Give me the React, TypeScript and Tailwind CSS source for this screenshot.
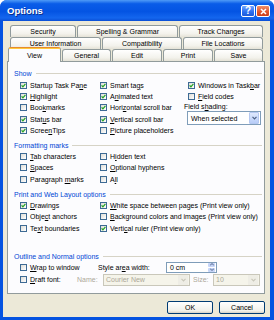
import React from 'react';

const font = "font-['Liberation_Sans',Arial,sans-serif]";

const Box: React.FC<{ checked?: boolean }> = ({ checked }) => (
  <span className="w-[7px] h-[7px] shrink-0 border border-[#3d6a94] bg-[linear-gradient(135deg,#dcdcd7,#ffffff)] flex items-center justify-center">
    {checked && (
      <svg width="5" height="5" viewBox="0 0 7 7">
        <path d="M0.8 3.4 L2.7 5.3 L6.2 1.2" stroke="#21a121" strokeWidth="1.7" fill="none" />
      </svg>
    )}
  </span>
);

const Check: React.FC<{ checked?: boolean; children: React.ReactNode }> = ({ checked, children }) => (
  <div className="flex items-center h-[11.4px] gap-[3px] whitespace-nowrap">
    <Box checked={checked} />
    <span>{children}</span>
  </div>
);

const Heading: React.FC<{ label: string }> = ({ label }) => (
  <div className="flex items-center h-[11.4px] text-[#0046d5]">
    <span className="whitespace-nowrap">{label}</span>
    <div className="flex-1 ml-[4px] h-px bg-[#d6d3c6]" />
  </div>
);

const Tab: React.FC<{ w: string; children: React.ReactNode }> = ({ w, children }) => (
  <div
    className={`${w} h-[12px] shrink-0 rounded-t-[3px] border border-b-0 border-[#919b9c] bg-[linear-gradient(180deg,#ffffff,#f3f2ec_70%,#e4e2d6)] flex items-center justify-center whitespace-nowrap`}
  >
    {children}
  </div>
);

const Chevron: React.FC<{ color: string }> = ({ color }) => (
  <svg width="5" height="4" viewBox="0 0 5 4">
    <path d="M0.5 0.8 L2.5 2.8 L4.5 0.8" stroke={color} strokeWidth="1.2" fill="none" />
  </svg>
);

const App: React.FC = () => {
  return (
    <div className={`${font} text-[7px] leading-none text-black w-[274px] h-[320px] bg-[#0553e1] rounded-t-[7px] overflow-hidden flex flex-col`}>
      {/* title bar */}
      <div className="h-[21px] shrink-0 bg-[linear-gradient(180deg,#4f9bf7_0%,#0a5ce8_18%,#0454e3_55%,#1466ee_85%,#0a4fd6_100%)] flex items-center pl-[7px] pr-[4px]">
        <span className="text-white font-bold text-[9.5px] [text-shadow:1px_1px_0_#0a2f8c] flex-1">Options</span>
        <div className="flex gap-[1px] mt-[1px]">
          <div className="w-[14px] h-[12px] rounded-[2px] border border-white bg-[linear-gradient(180deg,#6fa5ff,#2a6ef0_60%,#1d5ad8)] flex items-center justify-center text-white font-bold text-[10px]">
            ?
          </div>
          <div className="w-[14px] h-[12px] rounded-[2px] border border-white bg-[linear-gradient(180deg,#f0906a,#e0532a_60%,#c9401c)] flex items-center justify-center">
            <svg width="7" height="7" viewBox="0 0 7 7">
              <path d="M1 1 L6 6 M6 1 L1 6" stroke="#fff" strokeWidth="1.5" />
            </svg>
          </div>
        </div>
      </div>

      {/* body */}
      <div className="flex-1 ml-[3px] mr-[4px] mb-[3px] bg-[#ece9d8] flex flex-col pl-[4px] pr-[5px]">
        {/* tabs */}
        <div className="pt-[4px] flex flex-col">
          <div className="flex gap-[1px] pl-[3px] h-[12px]">
            <Tab w="w-[66px]">Security</Tab>
            <Tab w="w-[101px]">Spelling &amp; Grammar</Tab>
            <Tab w="w-[84px]">Track Changes</Tab>
          </div>
          <div className="flex gap-[1px] pl-[3px] h-[12px]">
            <Tab w="w-[91px]">User Information</Tab>
            <Tab w="w-[80px]">Compatibility</Tab>
            <Tab w="w-[80px]">File Locations</Tab>
          </div>
          <div className="flex gap-[1px] pl-[1px] h-[12px] items-end">
            <div className="relative z-10 w-[53px] h-[15px] -mb-[1px] shrink-0 rounded-t-[3px] border border-b-0 border-[#919b9c] border-t-[#e68b2c] bg-[#fcfcfe] flex flex-col">
              <div className="h-[1px] bg-[#ffc83c]" />
              <div className="flex-1 flex items-center justify-center">View</div>
            </div>
            <Tab w="w-[49px]">General</Tab>
            <Tab w="w-[50px]">Edit</Tab>
            <Tab w="w-[50px]">Print</Tab>
            <Tab w="w-[49px]">Save</Tab>
          </div>
        </div>

        {/* panel */}
        <div className="h-[233px] shrink-0 border border-[#919b9c] bg-[#fcfcfe] pt-[6px] pl-[6px] pr-[2px] flex flex-col">
          <Heading label="Show" />
          <div className="flex pl-[6px]">
            <div className="w-[80px] flex flex-col">
              <Check checked>Startup Task Pa<u>n</u>e</Check>
              <Check checked><u>H</u>ighlight</Check>
              <Check>Boo<u>k</u>marks</Check>
              <Check checked>Stat<u>u</u>s bar</Check>
              <Check checked>Scree<u>n</u>Tips</Check>
            </div>
            <div className="w-[84px] flex flex-col">
              <Check checked>Smart ta<u>g</u>s</Check>
              <Check checked>A<u>n</u>imated text</Check>
              <Check checked>Hori<u>z</u>ontal scroll bar</Check>
              <Check checked><u>V</u>ertical scroll bar</Check>
              <Check><u>P</u>icture placeholders</Check>
            </div>
            <div className="flex-1 flex flex-col">
              <div className="pl-[4px]">
                <Check checked>Windows in Task<u>b</u>ar</Check>
                <Check><u>F</u>ield codes</Check>
              </div>
              <div className="h-[8px] flex items-center whitespace-nowrap">Field s<u>h</u>ading:</div>
              <div className="ml-[3px] mt-[1px] w-[74px] h-[14px] border border-[#7f9db9] bg-white flex items-center">
                <span className="flex-1 pl-[3px]">When selected</span>
                <div className="w-[10px] h-[12px] mr-[1px] rounded-[1px] bg-[linear-gradient(180deg,#dfe9fd,#b8cdf8)] border border-[#b5c8f1] flex items-center justify-center">
                  <Chevron color="#4d6185" />
                </div>
              </div>
            </div>
          </div>

          <div className="mt-[3px]">
            <Heading label="Formatting marks" />
          </div>
          <div className="flex pl-[6px]">
            <div className="w-[80px] flex flex-col">
              <Check><u>T</u>ab characters</Check>
              <Check><u>S</u>paces</Check>
              <Check>Paragraph <u>m</u>arks</Check>
            </div>
            <div className="flex-1 flex flex-col">
              <Check>H<u>i</u>dden text</Check>
              <Check><u>O</u>ptional hyphens</Check>
              <Check>A<u>l</u>l</Check>
            </div>
          </div>

          <div className="mt-[3.5px]">
            <Heading label="Print and Web Layout options" />
          </div>
          <div className="flex pl-[6px]">
            <div className="w-[80px] flex flex-col">
              <Check checked><u>D</u>rawings</Check>
              <Check>Obje<u>c</u>t anchors</Check>
              <Check>Te<u>x</u>t boundaries</Check>
            </div>
            <div className="flex-1 flex flex-col">
              <Check checked><u>W</u>hite space between pages (Print view only)</Check>
              <Check><u>B</u>ackground colors and images (Print view only)</Check>
              <Check checked>Verti<u>c</u>al ruler (Print view only)</Check>
            </div>
          </div>

          <div className="mt-[16.5px]">
            <Heading label="Outline and Normal options" />
          </div>
          <div className="flex items-center h-[11px] pl-[6px] whitespace-nowrap">
            <div className="w-[78px] flex items-center gap-[3px]">
              <Box />
              <span><u>W</u>rap to window</span>
            </div>
            <span className="w-[68px]">Style ar<u>e</u>a width:</span>
            <div className="w-[51px] h-[11px] border border-[#7f9db9] bg-white flex items-center">
              <span className="flex-1 pl-[3px]">0 cm</span>
              <div className="w-[7px] h-[9px] mr-[1px] flex flex-col gap-[1px]">
                <div className="flex-1 rounded-[1px] bg-[#c6d5f8] flex items-center justify-center">
                  <svg width="4" height="3" viewBox="0 0 4 3"><path d="M0 2.5 L2 0.5 L4 2.5" stroke="#4d6185" strokeWidth="1" fill="none" /></svg>
                </div>
                <div className="flex-1 rounded-[1px] bg-[#c6d5f8] flex items-center justify-center">
                  <svg width="4" height="3" viewBox="0 0 4 3"><path d="M0 0.5 L2 2.5 L4 0.5" stroke="#4d6185" strokeWidth="1" fill="none" /></svg>
                </div>
              </div>
            </div>
          </div>
          <div className="flex items-center h-[12px] mt-[1px] pl-[6px] whitespace-nowrap">
            <div className="w-[57px] flex items-center gap-[3px]">
              <Box />
              <span><u>D</u>raft font:</span>
            </div>
            <span className="w-[26px] text-[#aca899]">Name:</span>
            <div className="w-[87px] h-[12px] border border-[#c9c7ba] bg-[#f5f4ea] flex items-center">
              <span className="flex-1 pl-[2px] text-[#aca899]">Courier New</span>
              <div className="w-[10px] h-[10px] mr-[1px] bg-[#eeede5] flex items-center justify-center">
                <Chevron color="#c9c7ba" />
              </div>
            </div>
            <span className="ml-[3px] w-[20px] text-[#aca899]">Size:</span>
            <div className="w-[47px] h-[12px] border border-[#c9c7ba] bg-[#f5f4ea] flex items-center">
              <span className="flex-1 pl-[2px] text-[#aca899]">10</span>
              <div className="w-[10px] h-[10px] mr-[1px] bg-[#eeede5] flex items-center justify-center">
                <Chevron color="#c9c7ba" />
              </div>
            </div>
          </div>
        </div>

        {/* buttons */}
        <div className="flex justify-end gap-[6px] pt-[6.7px]">
          <div className="w-[46px] h-[13px] rounded-[2px] border border-[#003c74] bg-[linear-gradient(180deg,#ffffff,#f0f0ea_80%,#d6d0c5)] flex items-center justify-center">
            OK
          </div>
          <div className="w-[46px] h-[13px] rounded-[2px] border border-[#003c74] bg-[linear-gradient(180deg,#ffffff,#f0f0ea_80%,#d6d0c5)] flex items-center justify-center">
            Cancel
          </div>
        </div>
      </div>
    </div>
  );
};

export default App;
